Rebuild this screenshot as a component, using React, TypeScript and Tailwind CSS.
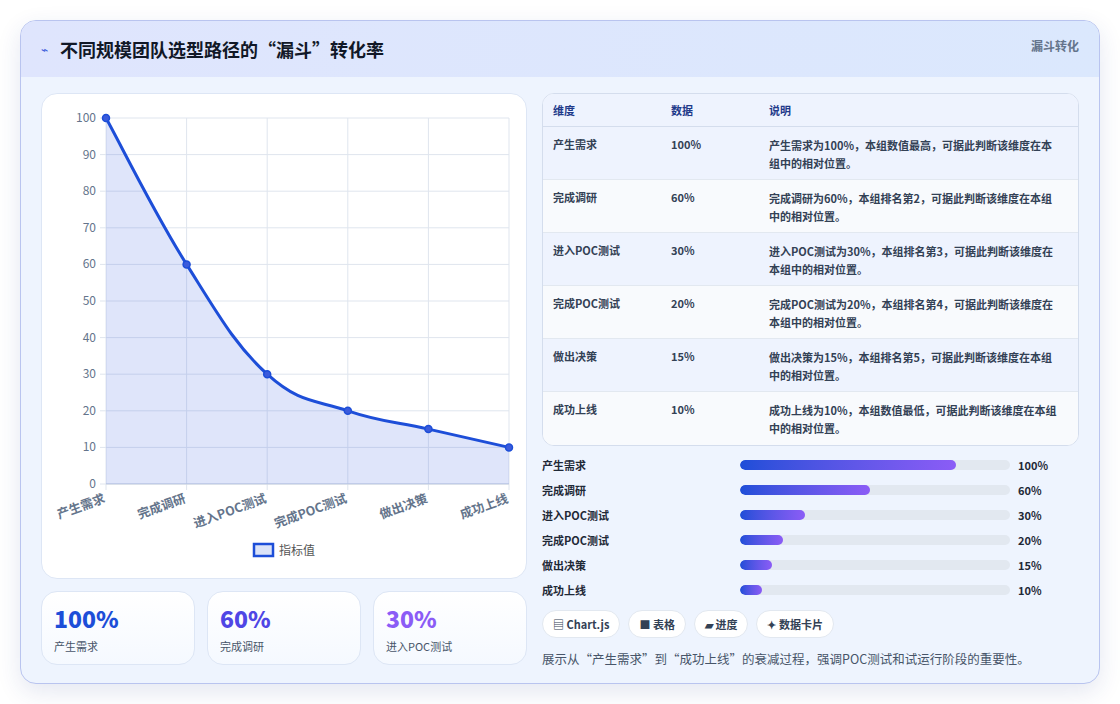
const data = [
  { name: "产生需求", v: 100, note: "产生需求为100%，本组数值最高，可据此判断该维度在本组中的相对位置。" },
  { name: "完成调研", v: 60, note: "完成调研为60%，本组排名第2，可据此判断该维度在本组中的相对位置。" },
  { name: "进入POC测试", v: 30, note: "进入POC测试为30%，本组排名第3，可据此判断该维度在本组中的相对位置。" },
  { name: "完成POC测试", v: 20, note: "完成POC测试为20%，本组排名第4，可据此判断该维度在本组中的相对位置。" },
  { name: "做出决策", v: 15, note: "做出决策为15%，本组排名第5，可据此判断该维度在本组中的相对位置。" },
  { name: "成功上线", v: 10, note: "成功上线为10%，本组数值最低，可据此判断该维度在本组中的相对位置。" },
];

const L = 64, R = 467, T = 24, B = 390;
const px = (i: number) => L + ((R - L) / 5) * i;
const py = (v: number) => B - ((B - T) * v) / 100;

function curve() {
  const pts = data.map((d, i) => [px(i), py(d.v)]);
  let d = `M${pts[0][0]},${pts[0][1]}`;
  for (let i = 0; i < pts.length - 1; i++) {
    const p0 = pts[i - 1] || pts[i];
    const p1 = pts[i];
    const p2 = pts[i + 1];
    const p3 = pts[i + 2] || p2;
    const t = 0.2;
    const c1 = [p1[0] + (p2[0] - p0[0]) * t, p1[1] + (p2[1] - p0[1]) * t];
    const c2 = [p2[0] - (p3[0] - p1[0]) * t, p2[1] - (p3[1] - p1[1]) * t];
    d += ` C${c1[0]},${c1[1]} ${c2[0]},${c2[1]} ${p2[0]},${p2[1]}`;
  }
  return d;
}

function Chart() {
  const line = curve();
  return (
    <svg width="486" height="485" className="block">
      {[0, 10, 20, 30, 40, 50, 60, 70, 80, 90, 100].map((v) => (
        <g key={v}>
          <line x1={L - 6} x2={R} y1={py(v)} y2={py(v)} stroke="#dfe5ee" />
          <text x={L - 10} y={py(v) + 4} textAnchor="end" fontSize="12" fill="#64748b">{v}</text>
        </g>
      ))}
      {data.map((d, i) => (
        <line key={i} x1={px(i)} x2={px(i)} y1={T} y2={B + 6} stroke="#dfe5ee" />
      ))}
      <line x1={L} x2={R} y1={B} y2={B} stroke="#c7d0de" />
      <path d={`${line} L${R},${B} L${L},${B} Z`} fill="rgba(79,110,230,0.18)" />
      <path d={line} fill="none" stroke="#1d4ed8" strokeWidth="3" />
      {data.map((d, i) => (
        <circle key={i} cx={px(i)} cy={py(d.v)} r="3.5" fill="#3b5bdb" stroke="#1d4ed8" strokeWidth="1.5" />
      ))}
      {data.map((d, i) => (
        <text key={i} transform={`translate(${px(i)},${B + 18}) rotate(-20)`} textAnchor="end" fontSize="12.5" fontWeight="700" fill="#64748b">{d.name}</text>
      ))}
      <rect x="212" y="450" width="19" height="12" fill="#dbe3f8" stroke="#1d4ed8" strokeWidth="2.5" />
      <text x="237" y="461" fontSize="12" fill="#555">指标值</text>
    </svg>
  );
}

const stats = [
  { v: "100%", l: "产生需求", c: "text-[#1d4ed8]" },
  { v: "60%", l: "完成调研", c: "text-[#4f46e5]" },
  { v: "30%", l: "进入POC测试", c: "text-[#8b5cf6]" },
];

export default function App() {
  return (
    <div className="w-[1120px] h-[704px] bg-white p-5" style={{ fontFamily: '"Noto Sans CJK SC", "Noto Sans", sans-serif' }}>
      <div className="h-[664px] rounded-2xl border border-[#b9c4ef] bg-[#eef4fe] overflow-hidden shadow-[0_8px_24px_rgba(30,60,140,0.12)]">
        <div className="h-14 bg-gradient-to-r from-[#dfe5fd] to-[#dbe8fd] flex items-center justify-between px-5 pr-5">
          <div className="flex items-center gap-3">
            <span className="text-[#3b5bdb] text-xs">⌁</span>
            <span className="text-[18px] font-bold text-[#111827]">不同规模团队选型路径的“漏斗”转化率</span>
          </div>
          <span className="text-[12px] font-bold text-[#64748b] self-start mt-4">漏斗转化</span>
        </div>
        <div className="flex gap-[15px] px-5 pt-4">
          <div className="w-[486px] flex flex-col gap-3">
            <div className="h-[486px] rounded-2xl bg-white border border-[#dde6f5]"><Chart /></div>
            <div className="grid grid-cols-3 gap-[12px]">
              {stats.map((s) => (
                <div key={s.v} className="h-[74px] rounded-2xl border border-[#dde6f5] bg-gradient-to-b from-white to-[#f5f9ff] px-3 pt-3">
                  <div className={`text-[23px] leading-7 font-extrabold ${s.c}`}>{s.v}</div>
                  <div className="text-[11px] mt-1.5 text-[#475569]">{s.l}</div>
                </div>
              ))}
            </div>
          </div>
          <div className="w-[540px]">
            <div className="rounded-xl border border-[#d4dded] bg-white overflow-hidden text-[11px]">
              <div className="flex h-[33px] items-center bg-[#eef3fe] border-b border-[#d4dded] font-bold text-[#1e3a8a]">
                <div className="w-[128px] pl-[10px]">维度</div>
                <div className="w-[98px]">数据</div>
                <div>说明</div>
              </div>
              {data.map((d, i) => (
                <div key={i} className={`flex h-[53px] pt-[9px] font-semibold text-[#334155] ${i % 2 === 0 ? "bg-[#eef3fe]" : "bg-[#f8fafd]"} ${i < 5 ? "border-b border-[#e2e8f0]" : ""}`}>
                  <div className="w-[128px] pl-[10px]">{d.name}</div>
                  <div className="w-[98px]">{d.v}%</div>
                  <div className="w-[294px] leading-[18px]">{d.note}</div>
                </div>
              ))}
            </div>
            <div className="mt-[10px] flex flex-col gap-[7px]">
              {data.map((d, i) => (
                <div key={i} className="flex items-center h-[18px] text-[11px] font-semibold text-[#1f2937]">
                  <div className="w-[198px]">{d.name}</div>
                  <div className="w-[270px] h-[10px] rounded-full bg-[#e2e8f0] overflow-hidden">
                    <div className="h-full rounded-full bg-gradient-to-r from-[#1d4ed8] to-[#8b5cf6]" style={{ width: `${Math.max(d.v * 0.8, 8)}%` }} />
                  </div>
                  <div className="ml-2 font-bold">{d.v}%</div>
                </div>
              ))}
            </div>
            <div className="flex gap-2 mt-[11px]">
              {["▤ Chart.js", "■ 表格", "▰ 进度", "✦ 数据卡片"].map((c) => (
                <span key={c} className="h-[28px] px-[10px] flex items-center rounded-full bg-white border border-[#e2e8f0] text-[11px] font-semibold text-[#334155]">{c}</span>
              ))}
            </div>
            <div className="mt-[12px] text-[12.5px] text-[#475569]">展示从“产生需求”到“成功上线”的衰减过程，强调POC测试和试运行阶段的重要性。</div>
          </div>
        </div>
      </div>
    </div>
  );
}
